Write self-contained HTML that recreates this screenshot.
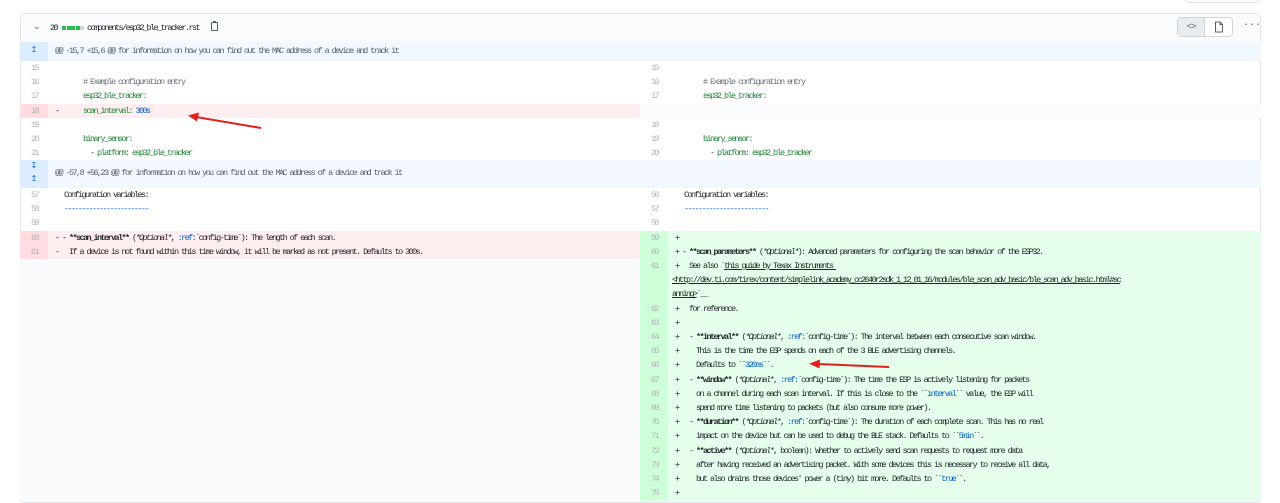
<!DOCTYPE html>
<html><head><meta charset="utf-8"><style>
*{margin:0;padding:0;box-sizing:border-box}
body{width:1280px;height:499px;background:#fff;position:relative;overflow:hidden;font-family:"Liberation Mono",monospace;font-size:8.5px;letter-spacing:-1.6px;color:#24292e}
.box{position:absolute;left:20px;top:13px;width:1241px;height:490px;border:1px solid #e1e4e8;border-radius:4px;background:#fff;overflow:hidden}
.hdr{position:absolute;left:0;top:0;right:0;height:29px;background:#fafbfc;border-bottom:1px solid #e1e4e8}
.r{position:absolute;height:14.2px;line-height:14.2px;white-space:pre}
.n{position:absolute;width:28px;height:14.2px;line-height:14.2px;text-align:right;padding-right:10px;color:#b0b4b8;white-space:pre}
.c{position:absolute;height:14.2px;line-height:14.2px;white-space:pre}
.del{background:#ffeef0}.deln{background:#ffdce0}
.add{background:#e6ffed}.addn{background:#cdffd8}
.g{color:#22863a}.b{color:#005cc5}.gr{color:#6a737d}.k{font-weight:bold}.i{font-style:italic}.u{text-decoration:underline;color:#24292e}
.hunk{position:absolute;left:0;width:1241px;background:#f1f8ff;color:#586069}
.hn{position:absolute;left:0;width:28px;background:#dbedff;color:#0366d6;text-align:center;font-size:8px;letter-spacing:0}
</style></head><body>
<div style="position:absolute;left:1185px;top:-8px;width:76px;height:11px;border:1px solid #e1e4e8;border-radius:4px;background:#fafbfc"></div>
<div class="box">
 <div class="hdr">
  <span style="position:absolute;left:12px;top:8px;font-size:9px;letter-spacing:0;color:#586069">&#8964;</span>
  <span style="position:absolute;left:29px;top:9px;">20</span>
  <span style="position:absolute;left:41px;top:12px;width:4px;height:4px;background:#2cbe4e"></span>
  <span style="position:absolute;left:45.5px;top:12px;width:4px;height:4px;background:#2cbe4e"></span>
  <span style="position:absolute;left:50px;top:12px;width:4px;height:4px;background:#2cbe4e"></span>
  <span style="position:absolute;left:54.5px;top:12px;width:4px;height:4px;background:#2cbe4e"></span>
  <span style="position:absolute;left:59px;top:12px;width:4px;height:4px;background:#d1d5da"></span>
  <span style="position:absolute;left:66px;top:9px;">components/esp32_ble_tracker.rst</span>
  <span style="position:absolute;left:190px;top:8px;width:7px;height:9px;border:1px solid #586069;border-radius:1px"></span>
  <span style="position:absolute;left:192px;top:7px;width:3px;height:2px;background:#586069"></span>
  <div style="position:absolute;left:1156px;top:3px;width:56px;height:20px;border:1px solid #d1d5da;border-radius:4px;background:#fff"></div>
  <div style="position:absolute;left:1157px;top:4px;width:27px;height:18px;background:#e9ecef;border-right:1px solid #d1d5da;text-align:center;line-height:18px;font-size:9px;letter-spacing:-1px;color:#586069">&lt;&gt;</div>
  <svg style="position:absolute;left:1193px;top:7px" width="10" height="12" viewBox="0 0 10 12"><path d="M1.5 1h4.5l2.5 2.5V11h-7z M6 1v2.5h2.5" fill="none" stroke="#586069" stroke-width="1"/></svg>
  <span style="position:absolute;left:1222px;top:6px;font-size:10px;letter-spacing:0;color:#586069">&middot;&middot;&middot;</span>
 </div>
</div>
<div style="position:absolute;left:20px;top:42px;width:1241px;height:457px;overflow:hidden">
<div class="hunk r" style="top:0;height:19px;line-height:19px"><span style="position:absolute;left:35px">@@ -15,7 +15,6 @@ for information on how you can find out the MAC address of a device and track it</span></div>
<div class="hn r" style="top:0;height:19px;line-height:17px">&#8613;</div>
</div>
<div id="rows" style="position:absolute;left:20px;top:0;width:1241px;height:499px">
<div class="n" style="top:61px;left:0">15</div>
<div class="n" style="top:75.2px;left:0">16</div><div class="c gr" style="top:75.2px;left:49px">    # Example configuration entry</div>
<div class="n" style="top:89.4px;left:0">17</div><div class="c g" style="top:89.4px;left:49px">    esp32_ble_tracker:</div>
<div class="c del" style="top:103.6px;left:0;width:620px"></div><div class="n deln" style="top:103.6px;left:0">18</div><div class="c" style="top:103.6px;left:35px">-       <span class="g">scan_interval:</span> <span class="b">300s</span></div>
<div class="n" style="top:117.8px;left:0">19</div>
<div class="n" style="top:132px;left:0">20</div><div class="c g" style="top:132px;left:49px">    binary_sensor:</div>
<div class="n" style="top:146.2px;left:0">21</div><div class="c" style="top:146.2px;left:49px">      - <span class="g">platform:</span> <span class="g">esp32_ble_tracker</span></div>
<div class="n" style="top:61px;left:620px">15</div>
<div class="n" style="top:75.2px;left:620px">16</div><div class="c gr" style="top:75.2px;left:669px">    # Example configuration entry</div>
<div class="n" style="top:89.4px;left:620px">17</div><div class="c g" style="top:89.4px;left:669px">    esp32_ble_tracker:</div>
<div class="c" style="top:103.6px;left:620px;width:621px;background:#fafbfc"></div>
<div class="n" style="top:117.8px;left:620px">18</div>
<div class="n" style="top:132px;left:620px">19</div><div class="c g" style="top:132px;left:669px">    binary_sensor:</div>
<div class="n" style="top:146.2px;left:620px">20</div><div class="c" style="top:146.2px;left:669px">      - <span class="g">platform:</span> <span class="g">esp32_ble_tracker</span></div>
<div class="hunk r" style="top:160.4px;height:27.6px;line-height:27px"><span style="position:absolute;left:35px">@@ -57,8 +56,23 @@ for information on how you can find out the MAC address of a device and track it</span></div>
<div class="hn r" style="top:160.4px;height:27.6px;line-height:13px">&#8615;<br>&#8613;</div>
<div class="n" style="top:188px;left:0">57</div><div class="c" style="top:188px;left:37px">  Configuration variables:</div>
<div class="n" style="top:202.2px;left:0">58</div><div class="c b" style="top:202.2px;left:37px">  ------------------------</div>
<div class="n" style="top:216.4px;left:0">59</div>
<div class="c del" style="top:230.6px;left:0;width:620px"></div><div class="n deln" style="top:230.6px;left:0">60</div><div class="c" style="top:230.6px;left:35px">- - <span class="k">**scan_interval**</span> (<span class="i">*Optional*</span>, <span class="b">:ref:</span>`config-time`): The length of each scan.</div>
<div class="c del" style="top:244.8px;left:0;width:620px"></div><div class="n deln" style="top:244.8px;left:0">61</div><div class="c" style="top:244.8px;left:35px">-   If a device is not found within this time window, it will be marked as not present. Defaults to 300s.</div>
<div class="c" style="top:259px;left:0;width:620px;height:240px;background:#f9fafb"></div>
<div class="n" style="top:188px;left:620px">56</div><div class="c" style="top:188px;left:657px">  Configuration variables:</div>
<div class="n" style="top:202.2px;left:620px">57</div><div class="c b" style="top:202.2px;left:657px">  ------------------------</div>
<div class="n" style="top:216.4px;left:620px">58</div>
<div class="c add" style="top:230.6px;left:620px;width:621px;height:270px"></div>
<div class="c addn" style="top:230.6px;left:620px;width:28px;height:270px"></div>
<div style="position:absolute;left:620px;top:230.6px">
<div class="n" style="top:0;left:0">59</div><div class="c" style="top:0;left:35px">+</div>
<div class="n" style="top:14.2px;left:0">60</div><div class="c" style="top:14.2px;left:35px">+ - <span class="k">**scan_parameters**</span> (<span class="i">*Optional*</span>): Advanced parameters for configuring the scan behavior of the ESP32.</div>
<div class="n" style="top:28.4px;left:0">61</div><div class="c" style="top:28.4px;left:35px">+   See also `<span class="u">this guide by Texax Instruments </span></div>
<div class="c u" style="top:42.6px;left:32px">&lt;http://dev.ti.com/tirex/content/simplelink_academy_cc2640r2sdk_1_12_01_16/modules/ble_scan_adv_basic/ble_scan_adv_basic.html#sc</div>
<div class="c" style="top:56.8px;left:32px"><span class="u">anning&gt;</span>`__</div>
<div class="n" style="top:71px;left:0">62</div><div class="c" style="top:71px;left:35px">+   for reference.</div>
<div class="n" style="top:85.2px;left:0">63</div><div class="c" style="top:85.2px;left:35px">+</div>
<div class="n" style="top:99.4px;left:0">64</div><div class="c" style="top:99.4px;left:35px">+   - <span class="k">**interval**</span> (<span class="i">*Optional*</span>, <span class="b">:ref:</span>`config-time`): The interval between each consecutive scan window.</div>
<div class="n" style="top:113.6px;left:0">65</div><div class="c" style="top:113.6px;left:35px">+     This is the time the ESP spends on each of the 3 BLE advertising channels.</div>
<div class="n" style="top:127.8px;left:0">66</div><div class="c" style="top:127.8px;left:35px">+     Defaults to ``<span class="b">320ms</span>``.</div>
<div class="n" style="top:142px;left:0">67</div><div class="c" style="top:142px;left:35px">+   - <span class="k">**window**</span> (<span class="i">*Optional*</span>, <span class="b">:ref:</span>`config-time`): The time the ESP is actively listening for packets</div>
<div class="n" style="top:156.2px;left:0">68</div><div class="c" style="top:156.2px;left:35px">+     on a channel during each scan interval. If this is close to the ``<span class="b">interval</span>`` value, the ESP will</div>
<div class="n" style="top:170.4px;left:0">69</div><div class="c" style="top:170.4px;left:35px">+     spend more time listening to packets (but also consume more power).</div>
<div class="n" style="top:184.6px;left:0">70</div><div class="c" style="top:184.6px;left:35px">+   - <span class="k">**duration**</span> (<span class="i">*Optional*</span>, <span class="b">:ref:</span>`config-time`): The duration of each complete scan. This has no real</div>
<div class="n" style="top:198.8px;left:0">71</div><div class="c" style="top:198.8px;left:35px">+     impact on the device but can be used to debug the BLE stack. Defaults to ``<span class="b">5min</span>``.</div>
<div class="n" style="top:213px;left:0">72</div><div class="c" style="top:213px;left:35px">+   - <span class="k">**active**</span> (<span class="i">*Optional*</span>, boolean): Whether to actively send scan requests to request more data</div>
<div class="n" style="top:227.2px;left:0">73</div><div class="c" style="top:227.2px;left:35px">+     after having received an advertising packet. With some devices this is necessary to receive all data,</div>
<div class="n" style="top:241.4px;left:0">74</div><div class="c" style="top:241.4px;left:35px">+     but also drains those devices' power a (tiny) bit more. Defaults to ``<span class="b">true</span>``.</div>
<div class="n" style="top:255.6px;left:0">75</div><div class="c" style="top:255.6px;left:35px">+</div>
</div>
</div>
<svg style="position:absolute;left:0;top:0" width="1280" height="499">
<line x1="261" y1="128" x2="196" y2="117" stroke="#e0201c" stroke-width="2"/>
<path d="M188 115.5 L199 112.5 L197 121.5 Z" fill="#e0201c"/>
<line x1="889" y1="367" x2="818" y2="364" stroke="#e0201c" stroke-width="2"/>
<path d="M809 363.7 L820 359.5 L819.5 368.5 Z" fill="#e0201c"/>
</svg>
</body></html>
